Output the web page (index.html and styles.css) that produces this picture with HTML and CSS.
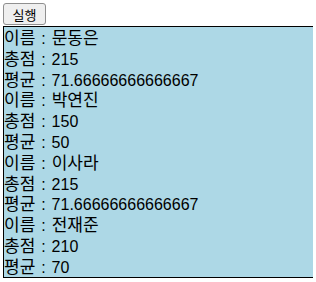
FILE: index.html
```html
<!DOCTYPE html>
<html>
<head>
  <title>학생 성적</title>
  <link rel="stylesheet" href="styles.css">
</head>
<body>
  <button type="button" class="run">실행</button>
  <div class="result" id="result">
    <p class="line"><span class="ko">이름</span> : <span class="ko">문동은</span></p>
    <p class="line"><span class="ko">총점</span> : 215</p>
    <p class="line"><span class="ko">평균</span> : 71.66666666666667</p>
    <p class="line"><span class="ko">이름</span> : <span class="ko">박연진</span></p>
    <p class="line"><span class="ko">총점</span> : 150</p>
    <p class="line"><span class="ko">평균</span> : 50</p>
    <p class="line"><span class="ko">이름</span> : <span class="ko">이사라</span></p>
    <p class="line"><span class="ko">총점</span> : 215</p>
    <p class="line"><span class="ko">평균</span> : 71.66666666666667</p>
    <p class="line"><span class="ko">이름</span> : <span class="ko">전재준</span></p>
    <p class="line"><span class="ko">총점</span> : 210</p>
    <p class="line"><span class="ko">평균</span> : 70</p>
  </div>
</body>
</html>
```
FILE: styles.css
```css
body {
    margin: 3px;
    overflow: hidden;
    font-family: "Liberation Sans", "Noto Sans CJK KR", sans-serif;
}
.run {
    display: block;
    height: 22px;
    width: 43px;
    padding: 0 6px;
    font-family: "Noto Sans CJK KR", sans-serif;
    font-size: 13px;
    background-color: #efefef;
    border: 1px solid #8f8f8f;
    border-radius: 3px;
    color: #000;
}
.result {
    width: 330px;
    margin-top: 1px;
    background-color: lightblue;
    border: 1px solid #000;
    font-size: 16px;
    color: #000;
}
.line {
    margin: 0;
    height: 20.8px;
    line-height: 20.8px;
    word-spacing: 1.5px;
    white-space: nowrap;
}
.ko {
    font-family: "Noto Sans CJK KR", sans-serif;
    font-size: 17px;
}
```
